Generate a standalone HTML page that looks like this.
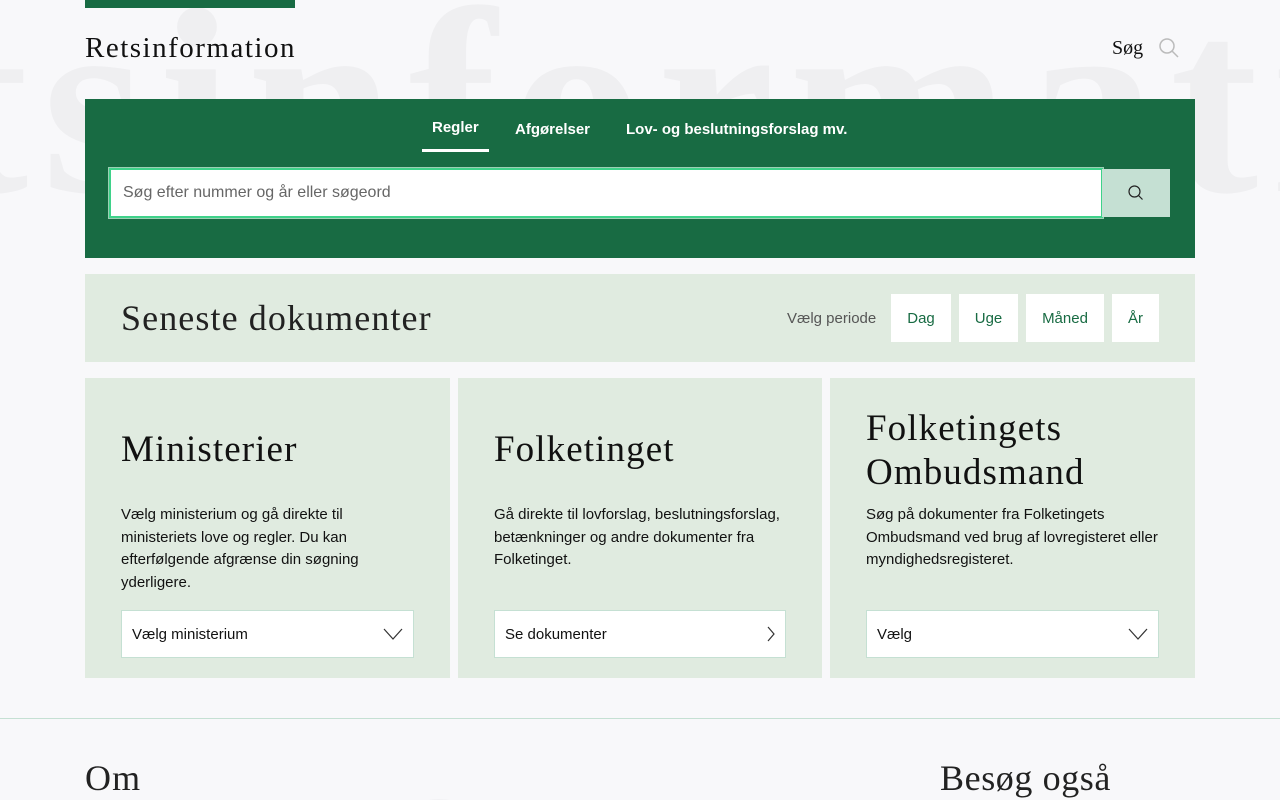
<!DOCTYPE html>
<html><head><meta charset="utf-8"><style>
*{box-sizing:border-box;margin:0;padding:0}
html,body{width:1280px;height:800px;overflow:hidden}
body{background:#f8f8fa;font-family:"Liberation Sans",sans-serif;position:relative;color:#111}
.clip{position:absolute;left:0;top:0;width:1280px;height:800px;overflow:hidden}
.wm{position:absolute;font-family:"Liberation Serif",serif;font-weight:bold;font-size:265px;color:#efeff1;white-space:nowrap;letter-spacing:14px;line-height:1}
.serif{font-family:"Liberation Serif",serif;letter-spacing:1.1px}
.abs{position:absolute}
</style></head><body>
<div class="clip">
<div class="wm" style="left:-60px;top:-30px">tsinformati</div>
<div class="wm" style="left:120px;top:765px">information</div>
</div>
<div class="abs" style="left:85px;top:0;width:210px;height:8px;background:#186b43"></div>
<div class="abs serif" style="left:85px;top:32px;font-size:29px;color:#111;letter-spacing:1.5px">Retsinformation</div>
<div class="abs serif" style="left:1112px;top:37px;font-size:20px;letter-spacing:0">Søg</div>
<svg class="abs" style="left:1157px;top:36px" width="24" height="24" viewBox="0 0 24 24" fill="none" stroke="#bbb" stroke-width="1.5"><circle cx="10" cy="10" r="7"/><path d="M15 15l6 6"/></svg>

<div class="abs" style="left:85px;top:99px;width:1110px;height:159px;background:#186b43">
  <div class="abs" style="left:347px;top:20px;font-size:15px;font-weight:bold;color:#fff">Regler</div>
  <div class="abs" style="left:337px;top:50px;width:67px;height:3px;background:#fff"></div>
  <div class="abs" style="left:430px;top:22px;font-size:15px;font-weight:bold;color:#fff">Afgørelser</div>
  <div class="abs" style="left:541px;top:22px;font-size:15px;font-weight:bold;color:#fff">Lov- og beslutningsforslag mv.</div>
  <div class="abs" style="left:24px;top:69px;width:994px;height:50px;background:#fff;border:2px solid #3fd28a;outline:1px solid #9ccfb4;font-size:16px;color:#666;padding:14px 12px 0">Søg efter nummer og år eller søgeord</div>
  <div class="abs" style="left:1017px;top:70px;width:68px;height:48px;background:#c5e0d3"></div>
  <svg class="abs" style="left:1042px;top:85px" width="18" height="18" viewBox="0 0 18 18" fill="none" stroke="#222" stroke-width="1.2"><circle cx="7.5" cy="7.5" r="5.5"/><path d="M11.5 11.5l4 4"/></svg>
</div>

<div class="abs" style="left:85px;top:274px;width:1110px;height:88px;background:#e0ebe0">
  <div class="abs serif" style="left:36px;top:23px;font-size:36px;color:#222">Seneste dokumenter</div>
  <div class="abs" style="left:702px;top:36px;font-size:15px;color:#555">Vælg periode</div>
  <div class="abs" style="left:806px;top:20px;width:60px;height:48px;background:#fff;color:#186b43;font-size:15px;text-align:center;line-height:50px">Dag</div>
  <div class="abs" style="left:874px;top:20px;width:59px;height:48px;background:#fff;color:#186b43;font-size:15px;text-align:center;line-height:50px">Uge</div>
  <div class="abs" style="left:941px;top:20px;width:78px;height:48px;background:#fff;color:#186b43;font-size:15px;text-align:center;line-height:50px">Måned</div>
  <div class="abs" style="left:1027px;top:20px;width:47px;height:48px;background:#fff;color:#186b43;font-size:15px;text-align:center;line-height:50px">År</div>
</div>

<div class="abs" style="left:85px;top:378px;width:365px;height:300px;background:#e0ebe0">
  <div class="abs serif" style="left:36px;top:50px;font-size:37px">Ministerier</div>
  <div class="abs" style="left:36px;top:126px;width:280px;font-size:15px;line-height:22.5px">Vælg ministerium og gå direkte til ministeriets love og regler. Du kan efterfølgende afgrænse din søgning yderligere.</div>
  <div class="abs" style="left:36px;top:232px;width:293px;height:48px;background:#fff;border:1px solid #c5e0d3;font-size:15px;padding:15px 10px 0">Vælg ministerium</div>
  <svg class="abs" style="left:298px;top:250px" width="20" height="12" viewBox="0 0 20 12" fill="none" stroke="#333" stroke-width="1.2"><path d="M1 1l9 10 9-10"/></svg>
</div>
<div class="abs" style="left:458px;top:378px;width:364px;height:300px;background:#e0ebe0">
  <div class="abs serif" style="left:36px;top:50px;font-size:37px">Folketinget</div>
  <div class="abs" style="left:36px;top:126px;width:300px;font-size:15px;line-height:22.5px">Gå direkte til lovforslag, beslutningsforslag, betænkninger og andre dokumenter fra Folketinget.</div>
  <div class="abs" style="left:36px;top:232px;width:292px;height:48px;background:#fff;border:1px solid #c5e0d3;font-size:15px;padding:15px 10px 0">Se dokumenter</div>
  <svg class="abs" style="left:308px;top:248px" width="10" height="16" viewBox="0 0 10 16" fill="none" stroke="#333" stroke-width="1.2"><path d="M2 1l6 7-6 7"/></svg>
</div>
<div class="abs" style="left:830px;top:378px;width:365px;height:300px;background:#e0ebe0">
  <div class="abs serif" style="left:36px;top:29px;font-size:37px;line-height:44px">Folketingets<br>Ombudsmand</div>
  <div class="abs" style="left:36px;top:126px;width:300px;font-size:15px;line-height:22.5px">Søg på dokumenter fra Folketingets Ombudsmand ved brug af lovregisteret eller myndighedsregisteret.</div>
  <div class="abs" style="left:36px;top:232px;width:293px;height:48px;background:#fff;border:1px solid #c5e0d3;font-size:15px;padding:15px 10px 0">Vælg</div>
  <svg class="abs" style="left:298px;top:250px" width="20" height="12" viewBox="0 0 20 12" fill="none" stroke="#333" stroke-width="1.2"><path d="M1 1l9 10 9-10"/></svg>
</div>

<div class="abs" style="left:0;top:718px;width:1280px;height:1px;background:#c5e0d3"></div>
<div class="abs serif" style="left:85px;top:757px;font-size:36px;color:#222">Om</div>
<div class="abs serif" style="left:940px;top:757px;font-size:36px;color:#222;letter-spacing:0.6px">Besøg også</div>
</body></html>
